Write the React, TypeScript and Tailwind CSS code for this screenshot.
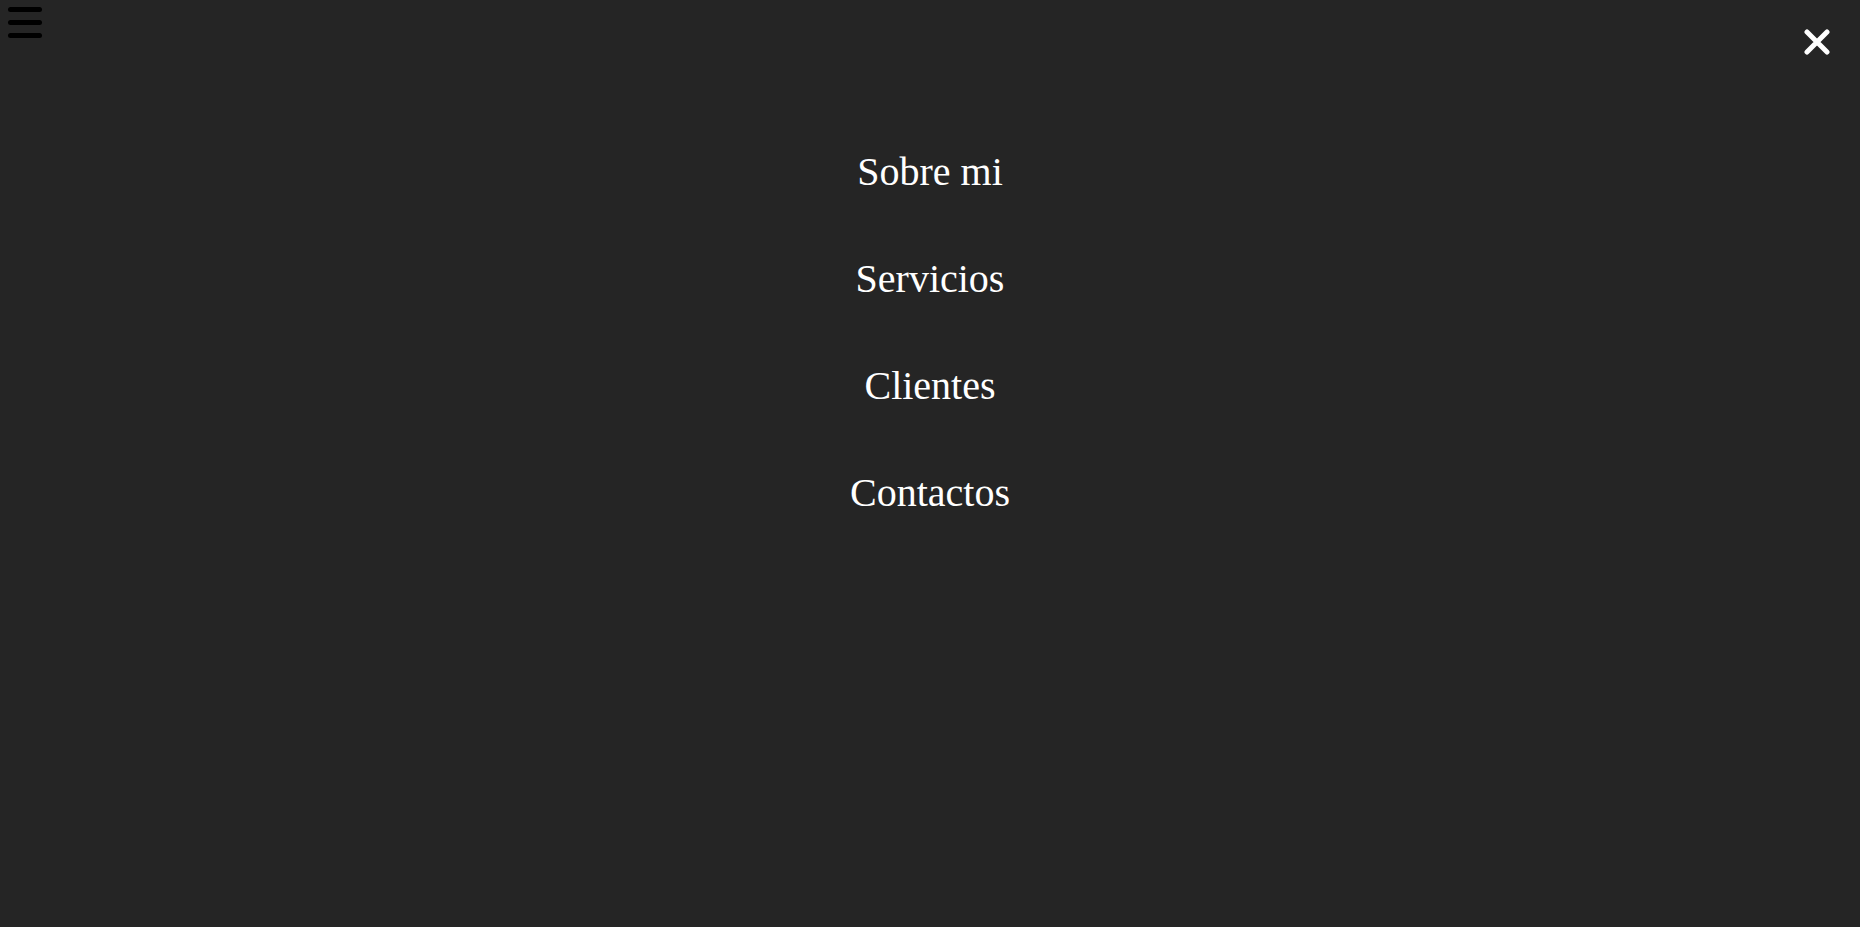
import React from "react";

export default function App() {
  const items = ["Sobre mi", "Servicios", "Clientes", "Contactos"];
  return (
    <div className="relative h-[927px] w-full overflow-hidden bg-[#252525]" style={{ fontFamily: '"Liberation Serif", serif' }}>
      <button className="absolute left-[8px] top-[7px] flex flex-col gap-[8.5px]" aria-label="menu">
        <span className="block h-[4.5px] w-[34px] rounded-full bg-black" />
        <span className="block h-[4.5px] w-[34px] rounded-full bg-black" />
        <span className="block h-[4.5px] w-[34px] rounded-full bg-black" />
      </button>
      <button className="absolute left-[1804px] top-[29px]" aria-label="close">
        <svg width="26" height="26" viewBox="0 0 26 26">
          <path d="M3 3 L23 23 M23 3 L3 23" stroke="white" strokeWidth="5" strokeLinecap="round" />
        </svg>
      </button>
      <nav className="flex flex-col items-center gap-[61px] pt-[149px]">
        {items.map((t) => (
          <a key={t} className="text-[40px] leading-[46px] text-white">
            {t}
          </a>
        ))}
      </nav>
    </div>
  );
}
